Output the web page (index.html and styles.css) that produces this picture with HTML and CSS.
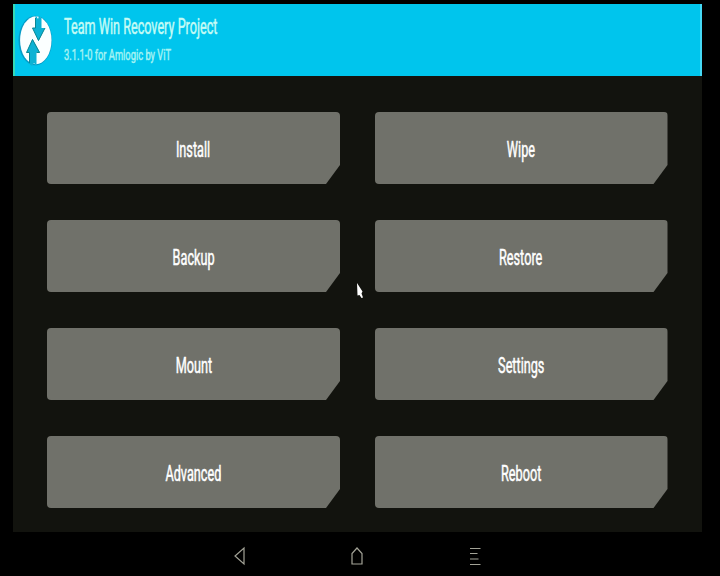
FILE: index.html
```html
<!DOCTYPE html>
<html lang="en">
<head>
<meta charset="utf-8">
<title>Team Win Recovery Project</title>
<link rel="stylesheet" href="styles.css">
</head>
<body>
<div class="screen">
  <header class="header">
    <svg class="logo" width="36" height="54" viewBox="0 0 36 54">
      <ellipse cx="17.300" cy="26.500" rx="16.800" ry="24.800" fill="#087fae" opacity=".6"/>
      <ellipse cx="17.800" cy="26.300" rx="15.700" ry="24" fill="#fbffff"/>
      <path d="M17.500 1L20 5L21 2L23.500 4V14H27L20.500 27L14.500 14H17.500Z" fill="#0cb2d4"/>
      <path d="M11.500 50V38.500H8.500L14.500 25L22 38.500H18.500V52L16 49L14 52Z" fill="#0cb2d4"/>
      <path d="M17.500 4V14H14.500L20.500 26.500L27 14M11.500 49V38.500H8.500L14.500 25.500L21.500 38.500H18.500" fill="none" stroke="#0a8794"/>
    </svg>
    <div class="titles">
      <h1 class="title">Team Win Recovery Project</h1>
      <p class="version">3.1.1-0 for Amlogic by ViT</p>
    </div>
  </header>
  <main class="menu">
    <button class="tile"><span class="label">Install</span></button>
    <button class="tile"><span class="label">Wipe</span></button>
    <button class="tile"><span class="label">Backup</span></button>
    <button class="tile"><span class="label">Restore</span></button>
    <button class="tile"><span class="label">Mount</span></button>
    <button class="tile"><span class="label">Settings</span></button>
    <button class="tile"><span class="label">Advanced</span></button>
    <button class="tile"><span class="label">Reboot</span></button>
  </main>
</div>
<nav class="navbar">
  <svg width="20" height="24" viewBox="0 0 20 24"><path d="M14 4V20L5 12Z"/></svg>
  <svg width="20" height="24" viewBox="0 0 20 24"><path d="M10 4L15 9.500V20H5V9.500Z"/></svg>
  <svg width="20" height="24" viewBox="0 0 20 24"><path d="M5 4.500H15.500M5 9.500H12.500M5 15H13.500M5 20.500H15.500"/></svg>
</nav>
<svg class="pointer" width="10" height="18" viewBox="0 0 10 18"><path d="M1 1L6.500 9.500L5.500 11.500L7 15.500L5.500 16L3.500 13L1.500 13.500Z"/></svg>
</body>
</html>
```
FILE: styles.css
```css
* { box-sizing: border-box; }

body {
  width: 720px;
  height: 576px;
  margin: 0;
  padding: 4px 18.500px 0 12.500px;
  overflow: hidden;
  background: #000;
  color: #fff;
  font-family: Roboto, "Liberation Sans", sans-serif;
}

.screen {
  height: 528px;
  background: #12130e;
}

.header {
  display: flex;
  height: 72px;
  padding: 10px 0 0 3.500px;
  background: #00c5ed;
  border-left: 2px solid #35d9b5;
  border-right: 2px solid #45d9f5;
}

.logo { flex: none; }

.titles { padding: 1px 0 0 10px; }

.title,
.version {
  margin: 0;
  white-space: nowrap;
  font-weight: 400;
  transform-origin: 0 50%;
  color: #c5fbf5;
}

.title {
  font-size: 21.500px;
  line-height: 24px;
  transform: scaleX(.588);
  -webkit-text-stroke: .5px #c5fbf5;
}

.version {
  margin-top: 7px;
  font-size: 15.500px;
  line-height: 18px;
  transform: scaleX(.602);
  color: #a5f3f3;
  -webkit-text-stroke: .5px #a5f3f3;
}

.menu {
  display: grid;
  grid-template-columns: 293px 293px;
  grid-auto-rows: 72px;
  gap: 36px 34.500px;
  padding: 36px 0 0 34.500px;
}

.tile {
  display: flex;
  align-items: center;
  justify-content: center;
  padding: 4px 0 0;
  border: 0;
  border-radius: 4px;
  background: #70716a;
  color: #fff;
  font: 400 21.500px/26px Roboto, "Liberation Sans", sans-serif;
  clip-path: polygon(0 0, 100% 0, 100% 53px, calc(100% - 14px) 100%, 0 100%);
}

.label {
  transform: scaleX(.59);
  -webkit-text-stroke: .5px #fff;
}

.navbar {
  display: flex;
  gap: 97.500px;
  padding: 12px 0 0 217px;
}

.navbar svg {
  fill: none;
  stroke: #a3a397;
  stroke-width: 1.200;
}

.pointer {
  position: absolute;
  left: 356px;
  top: 282px;
  fill: #fff;
}
```
